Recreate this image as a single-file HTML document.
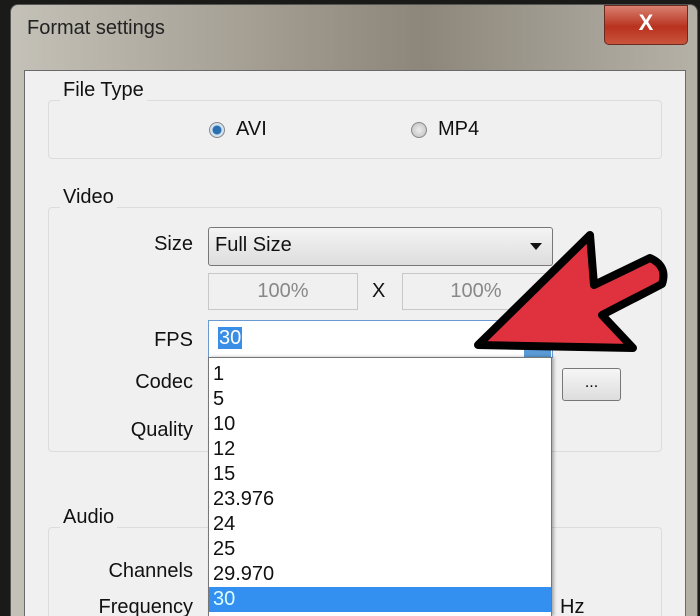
<!DOCTYPE html>
<html><head><style>
html,body{margin:0;width:700px;height:616px;overflow:hidden}
body{background:#1a1a18;font-family:"Liberation Sans",sans-serif;position:relative}
.a{position:absolute}
.frame{left:10px;top:4px;width:688px;height:612px;background:linear-gradient(90deg,#c4c1b8 0%,#a09a8e 40%,#8d877b 60%,#b5b1a7 100%);border-radius:8px 8px 0 0;border-left:1px solid #555;border-top:1px solid #555;border-right:1px solid #555;box-sizing:border-box}
.client{left:24px;top:70px;width:662px;height:546px;background:#f0f0f0;border:1px solid #6a6a6a;border-bottom:0;box-sizing:border-box}
.t{font-size:20px;color:#111}
.grp{border:1px solid #dcdcdc;border-radius:4px;box-sizing:border-box}
.lbl{font-size:20px;color:#111;background:#f0f0f0;padding:0 3px}
.r{text-align:right;width:150px;font-size:20px;color:#111}
.radio{width:14px;height:14px;border-radius:50%;border:1px solid #888;background:radial-gradient(circle,#eee,#bbb)}
.li{font-size:20px;color:#111;left:213px;height:25px;line-height:25px}
</style></head><body>
<div class="a frame"></div>
<div class="a t" style="left:27px;top:17px;color:#222">Format settings</div>
<div class="a" style="left:604px;top:5px;width:82px;height:38px;border-radius:0 0 5px 5px;background:linear-gradient(#d98070,#b8321f 55%,#c9543c);border:1px solid #6b2a20;color:#fff;font-size:22px;font-weight:bold;text-align:center;line-height:34px">X</div>
<div class="a client"></div>
<div class="a grp" style="left:48px;top:100px;width:614px;height:59px"></div>
<div class="a lbl" style="left:60px;top:79px">File Type</div>
<div class="a radio" style="left:209px;top:122px;background:radial-gradient(circle,#2a6fb0 40%,#cfe3f3 50%,#ddd)"></div>
<div class="a t" style="left:236px;top:118px">AVI</div>
<div class="a radio" style="left:411px;top:122px"></div>
<div class="a t" style="left:438px;top:118px">MP4</div>
<div class="a grp" style="left:48px;top:207px;width:614px;height:245px"></div>
<div class="a lbl" style="left:60px;top:186px">Video</div>
<div class="a grp" style="left:48px;top:527px;width:614px;height:89px;border-bottom:0;border-radius:4px 4px 0 0"></div>
<div class="a lbl" style="left:60px;top:506px">Audio</div>
<div class="a r" style="left:43px;top:233px">Size</div>
<div class="a" style="left:208px;top:227px;width:343px;height:37px;border:1px solid #777;border-radius:3px;background:linear-gradient(#f4f4f4,#ddd)"></div>
<div class="a t" style="left:215px;top:234px">Full Size</div>
<div class="a" style="left:530px;top:243px;border-left:6px solid transparent;border-right:6px solid transparent;border-top:7px solid #111"></div>
<div class="a" style="left:208px;top:273px;width:148px;height:35px;border:1px solid #c8c8c8;background:#f0f0f0;text-align:center;line-height:35px;font-size:20px;color:#888">100%</div>
<div class="a t" style="left:372px;top:280px">X</div>
<div class="a" style="left:402px;top:273px;width:146px;height:35px;border:1px solid #c8c8c8;background:#f0f0f0;text-align:center;line-height:35px;font-size:20px;color:#888">100%</div>
<div class="a r" style="left:43px;top:329px">FPS</div>
<div class="a" style="left:208px;top:320px;width:343px;height:36px;border:1px solid #6a9ad0;background:#fff"></div>
<div class="a" style="left:218px;top:327px;background:#3a8ee6;color:#fff;font-size:20px;line-height:22px;padding:0 1px">30</div>
<div class="a" style="left:524px;top:348px;width:27px;height:9px;background:#5a9ad6"></div>
<div class="a r" style="left:43px;top:371px">Codec</div>
<div class="a" style="left:562px;top:368px;width:57px;height:31px;border:1px solid #777;border-radius:3px;background:linear-gradient(#f6f6f6,#ddd);text-align:center;font-size:16px;line-height:28px">...</div>
<div class="a r" style="left:43px;top:419px">Quality</div>
<div class="a r" style="left:43px;top:560px">Channels</div>
<div class="a r" style="left:43px;top:596px;height:20px;overflow:hidden">Frequency</div>
<div class="a t" style="left:560px;top:596px;height:20px;overflow:hidden">Hz</div>
<div class="a" style="left:208px;top:357px;width:344px;height:259px;background:#fff;border:1px solid #777;border-bottom:0;box-sizing:border-box;box-shadow:2px 0 3px rgba(0,0,0,.3)"></div>
<div class="a li" style="top:362px">1</div>
<div class="a li" style="top:387px">5</div>
<div class="a li" style="top:412px">10</div>
<div class="a li" style="top:437px">12</div>
<div class="a li" style="top:462px">15</div>
<div class="a li" style="top:487px">23.976</div>
<div class="a li" style="top:512px">24</div>
<div class="a li" style="top:537px">25</div>
<div class="a li" style="top:562px">29.970</div>
<div class="a" style="left:209px;top:587px;width:342px;height:25px;background:#3390f0"></div>
<div class="a li" style="top:587px;color:#dff">30</div>
<svg class="a" style="left:0;top:0" width="700" height="616">
<path d="M478,345 L590,235 L594,285 L650,258 Q668,266 662,284 L602,315 L633,348 Z" fill="#e0323e" stroke="#000" stroke-width="8" stroke-linejoin="round"/>
</svg>
</body></html>
